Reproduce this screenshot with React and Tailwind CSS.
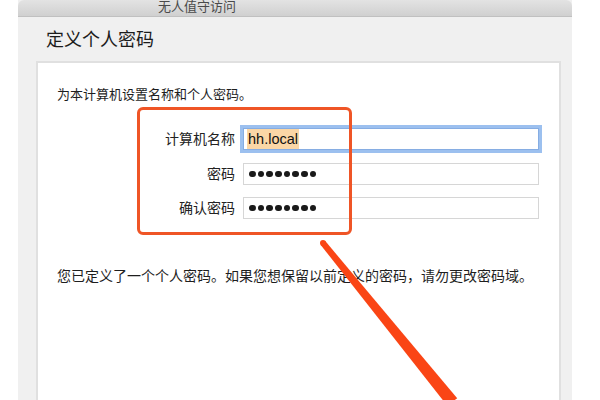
import React from "react";

const font = { fontFamily: '"Liberation Sans", "Noto Sans CJK SC", sans-serif' };

function Dots() {
  return (
    <div className="flex items-center gap-[2.2px] pl-[5px] h-full">
      {[0, 1, 2, 3, 4, 5, 6, 7].map((i) => (
        <div key={i} className="w-[6.5px] h-[6.5px] rounded-full bg-[#1a1a1a]" />
      ))}
    </div>
  );
}

function Row({ label, children, focused, className = "" }) {
  return (
    <div className={"flex items-center h-[22px] " + className}>
      <div className="w-[178px] text-right text-[14px] leading-[14px] text-[#222]">{label}</div>
      <div
        className={
          "ml-[8px] w-[296px] h-[22px] bg-white border " +
          (focused
            ? "border-[#86ade3] shadow-[0_0_0_3px_#9cc0ef]"
            : "border-[#d6d6d6]")
        }
      >
        {children}
      </div>
    </div>
  );
}

export default function App() {
  return (
    <div className="relative w-[600px] h-[400px] bg-white overflow-hidden" style={font}>
      <div className="ml-[18px] w-[554px] h-full flex flex-col bg-[#f0f0f0]">
        <div className="h-[17px] rounded-t-[6px] bg-gradient-to-b from-[#e3e3e3] to-[#d0d0d0] border-b border-[#c0c0c0] pl-[140px] text-[13px] leading-[13px] text-[#4a4a4a]">
          无人值守访问
        </div>
        <div className="mt-[14px] ml-[28px] text-[18px] leading-[18px] text-[#1c1c1c]">定义个人密码</div>
        <div className="mt-[12px] ml-[18px] w-[525px] flex-1 bg-white border-2 border-b-0 border-[#e0e0e0] pt-[25px] pl-[19px]">
          <div className="text-[13px] leading-[13px] text-[#1e1e1e]">为本计算机设置名称和个人密码。</div>
          <Row label="计算机名称" focused className="mt-[27px]">
            <div className="flex items-center h-full pl-[3px]">
              <span className="bg-[#fbd7a6] text-[14.5px] leading-[20px] text-[#111] px-[1px]">hh.local</span>
            </div>
          </Row>
          <Row label="密码" className="mt-[13px]">
            <Dots />
          </Row>
          <Row label="确认密码" className="mt-[12px]">
            <Dots />
          </Row>
          <div className="mt-[50px] text-[14px] leading-[14px] text-[#1e1e1e]">
            您已定义了一个个人密码。如果您想保留以前定义的密码，请勿更改密码域。
          </div>
        </div>
      </div>

      <div className="absolute left-[137px] top-[107px] w-[215px] h-[128px] border-[3px] border-[#ef5526] rounded-[6px]" />

      <svg className="absolute left-0 top-0" width="600" height="400" viewBox="0 0 600 400">
        <polygon points="325.3,241.1 457.2,398.2 447.3,405.8 320.7,244.9" fill="#fa4515" />
        <circle cx="323" cy="243" r="3" fill="#fa4515" />
      </svg>
    </div>
  );
}
